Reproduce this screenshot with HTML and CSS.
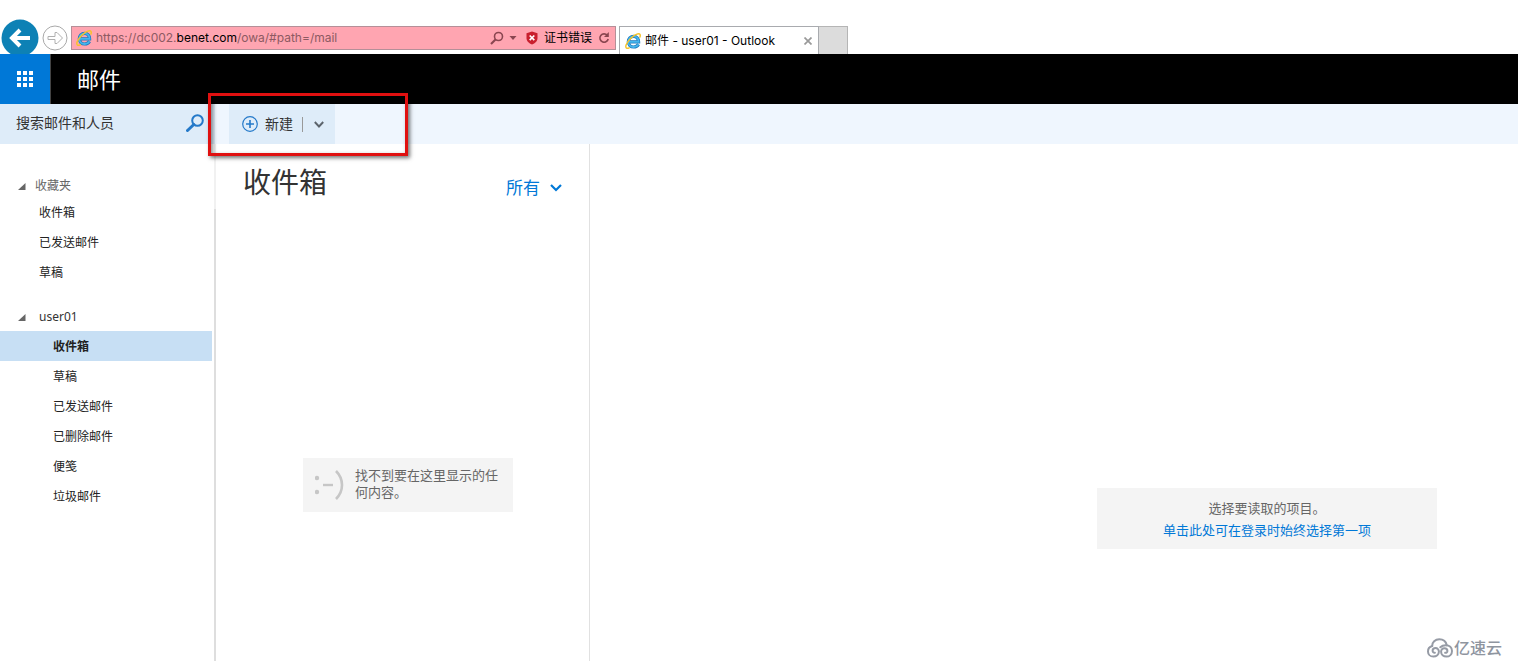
FILE: index.html
```html
<!DOCTYPE html>
<html lang="zh-CN">
<head>
<meta charset="utf-8">
<title>邮件 - user01 - Outlook</title>
<link rel="stylesheet" href="styles.css">
</head>
<body>
<svg class="defs" width="0" height="0" aria-hidden="true">
  <symbol id="ie" viewBox="0 0 16 16">
    <path d="M4 8.800h9.600C13.600 5.600 11.500 3.400 8.700 3.400 5.600 3.400 3.300 5.800 3.300 8.800c0 3 2.300 5.200 5.400 5.200 2.300 0 3.900-1 4.800-2.600" fill="none" stroke="#1b78bd" stroke-width="3.200"/>
    <path d="M4 8.800h9.600C13.600 5.600 11.500 3.400 8.700 3.400 5.600 3.400 3.300 5.800 3.300 8.800c0 3 2.300 5.200 5.400 5.200 2.300 0 3.900-1 4.800-2.600" fill="none" stroke="#45b5ec" stroke-width="1.800"/>
    <path d="M4.200 14.900C1.600 16.100.2 14.800 1.100 12 2.600 7.800 8.500 2 12.500.9c2.600-.6 3.200.8 2.400 3.200" fill="none" stroke="#f5c32c" stroke-width="1.500" stroke-linecap="round"/>
  </symbol>
</svg>

<header class="browser">
  <button class="back" aria-label="后退">
    <svg width="38" height="38" viewBox="0 0 38 38"><circle cx="19" cy="19" r="18.500" fill="#0d81b5"/><path d="M29 19H12M19 11l-8 8 8 8" fill="none" stroke="#fff" stroke-width="4"/></svg>
  </button>
  <button class="forward" aria-label="前进">
    <svg width="26" height="26" viewBox="0 0 26 26"><circle cx="13" cy="13" r="12" fill="#fff" stroke="#a9a9a9"/><path d="M6 11.500h7V7.500h2l5.500 5.500-5.500 5.500h-2v-4H6z" fill="#fff" stroke="#b0b0b0"/></svg>
  </button>
  <div class="address">
    <svg class="ie" width="16" height="16"><use href="#ie"/></svg>
    <span class="url">https://dc002.<b>benet.com</b>/owa/#path=/mail</span>
    <button aria-label="搜索"><svg width="14" height="14" viewBox="0 0 14 14" fill="none" stroke="#8a4650"><circle cx="8.500" cy="5.500" r="4" stroke-width="1.600"/><path d="M5.500 8.500L1 13" stroke-width="2.200"/></svg></button>
    <button class="drop" aria-label="地址列表"><svg width="8" height="5" viewBox="0 0 8 5"><path d="M.5 0h7L4 4z" fill="#8a4650"/></svg></button>
    <button class="cert"><svg width="12" height="14" viewBox="0 0 12 14"><path d="M6 .5l5.500 1.800V7c0 3.200-2.500 5.500-5.500 6.500C3 12.500.5 10.200.5 7V2.300z" fill="#c91f2e"/><path d="M3.700 4.500l4.600 4.600m0-4.600L3.700 9.100" stroke="#fff" stroke-width="1.700"/></svg>证书错误</button>
    <button class="reload" aria-label="刷新"><svg width="12" height="12" viewBox="0 0 12 12"><path d="M9.300 3.300A4.200 4.200 0 1 0 10.200 7" fill="none" stroke="#8a4650" stroke-width="1.600"/><path d="M10.800 0v5H6z" fill="#8a4650"/></svg></button>
  </div>
  <div class="tab">
    <svg width="16" height="16"><use href="#ie"/></svg>
    <span class="tab-title">邮件 - user01 - Outlook</span>
    <button aria-label="关闭标签页"><svg width="8" height="8" viewBox="0 0 8 8"><path d="M.5.500l7 7m0-7l-7 7" stroke="#999" stroke-width="1.700"/></svg></button>
  </div>
  <button class="new-tab" aria-label="新建标签页"></button>
</header>

<div class="app-bar">
  <button class="launcher" aria-label="应用启动器">
    <svg width="16" height="16" viewBox="0 0 16 16" fill="#fff"><path d="M0 0h4v4H0zM6 0h4v4H6zM12 0h4v4h-4zM0 6h4v4H0zM6 6h4v4H6zM12 6h4v4h-4zM0 12h4v4H0zM6 12h4v4H6zM12 12h4v4h-4z"/></svg>
  </button>
  <span class="app-name">邮件</span>
</div>

<div class="commands">
  <form class="search">
    <input type="text" aria-label="搜索邮件和人员" placeholder="搜索邮件和人员">
    <button type="button" aria-label="搜索"><svg width="18" height="18" viewBox="0 0 18 18" fill="none" stroke="#2479c9"><circle cx="11.500" cy="6.500" r="5.300" stroke-width="2"/><path d="M7.800 10.500L1.500 16.500" stroke-width="3" stroke-linecap="round"/></svg></button>
  </form>
  <div class="create">
    <button class="create-main"><svg width="16" height="16" viewBox="0 0 16 16" fill="none" stroke="#2479c9"><circle cx="8" cy="8" r="7.300" stroke-width="1.200"/><path d="M8 4v8M4 8h8" stroke-width="1.600"/></svg>新建</button>
    <span class="divider"></span>
    <button class="create-more" aria-label="更多新建选项"><svg width="10" height="7" viewBox="0 0 10 7"><path d="M.8 1l4.200 4.500L9.200 1" fill="none" stroke="#5c646c" stroke-width="1.900"/></svg></button>
  </div>
</div>

<main class="panes">
  <nav class="folders">
    <h2 class="favorites"><svg width="8" height="7" viewBox="0 0 8 7"><path d="M7.500 0v7H0z" fill="#666"/></svg>收藏夹</h2>
    <ul class="favorite-list">
      <li><a href="#">收件箱</a></li>
      <li><a href="#">已发送邮件</a></li>
      <li><a href="#">草稿</a></li>
    </ul>
    <h2 class="account"><svg width="8" height="7" viewBox="0 0 8 7"><path d="M7.500 0v7H0z" fill="#666"/></svg>user01</h2>
    <ul class="account-list">
      <li class="selected"><a href="#">收件箱</a></li>
      <li><a href="#">草稿</a></li>
      <li><a href="#">已发送邮件</a></li>
      <li><a href="#">已删除邮件</a></li>
      <li><a href="#">便笺</a></li>
      <li><a href="#">垃圾邮件</a></li>
    </ul>
  </nav>
  <div class="splitter"></div>
  <section class="messages">
    <div class="list-head">
      <h1>收件箱</h1>
      <button class="filter">所有<svg width="12" height="8" viewBox="0 0 12 8"><path d="M1 1l5 5 5-5" fill="none" stroke="#0078d7" stroke-width="2.200"/></svg></button>
    </div>
    <div class="empty">
      <svg width="30" height="32" viewBox="0 0 30 32" fill="none" stroke="#c6c6c6"><g fill="#c6c6c6" stroke="none"><circle cx="2" cy="10" r="2.200"/><circle cx="2" cy="24" r="2.200"/></g><path d="M8 17h10" stroke-width="2.400"/><path d="M21 3q6 6 6 14t-6 14" stroke-width="2.600"/></svg>
      <p>找不到要在这里显示的任何内容。</p>
    </div>
  </section>
  <section class="reading">
    <div class="hint">
      <p>选择要读取的项目。</p>
      <a href="#">单击此处可在登录时始终选择第一项</a>
    </div>
  </section>
</main>

<div class="highlight"></div>
<div class="watermark">
  <svg width="26" height="20" viewBox="0 0 26 20" fill="none" stroke="#969ba5" stroke-width="2" stroke-linecap="round">
    <path d="M5.200 8C5 4 8.200 1.300 12.300 1.300c3.900 0 6.700 2.300 7.500 5.900"/>
    <path d="M5.200 8C2.800 8.700 1 10.700 1 13.400c0 3 2.300 5.200 5.300 5.200 3.200 0 5.600-2 5.600-5 0-2-1.500-3.500-3.300-3.500-1.700 0-3 1.200-3 2.700 0 1.300 1 2.100 2.300 1.900"/>
    <path d="M13.300 9.300c1.400-1.400 3.200-2.100 5.500-2.100 3.600 0 6.200 2.300 6.200 5.700 0 3.300-2.400 5.700-5.600 5.700-3 0-5.300-2-5.300-4.800 0-2 1.400-3.600 3.300-3.600 1.700 0 3 1.200 3 2.700 0 1.300-1 2.100-2.300 1.900"/>
  </svg>
  亿速云
</div>
</body>
</html>
```
FILE: styles.css
```css
* { box-sizing: border-box; }
body {
  margin: 0;
  min-height: 100vh;
  display: flex;
  flex-direction: column;
  position: relative;
  background: #fff;
  color: #333;
  font: 12px/16px "Noto Sans", "Noto Sans CJK SC", sans-serif;
}
button {
  display: flex;
  align-items: center;
  padding: 0;
  border: 0;
  background: none;
  color: inherit;
  font: inherit;
}
a { color: inherit; text-decoration: none; }
h1, h2, p, ul { margin: 0; padding: 0; font-weight: normal; }
ul { list-style: none; }
svg { display: block; flex: none; }
.defs { position: absolute; }

/* Browser chrome */
.browser {
  height: 54px;
  padding: 19px 0 0 1px;
  display: flex;
  align-items: flex-start;
  overflow: hidden;
}
.forward { margin: 6px 3px 0; }
.address {
  width: 545px;
  height: 24px;
  margin-top: 7px;
  padding: 0 5px 0 4px;
  display: flex;
  align-items: center;
  background: #ffa5b1;
  border: 1px solid #b58f98;
  color: #000;
}
.url {
  flex: 1;
  margin-left: 4px;
  font-family: Inter, "Noto Sans", sans-serif;
  color: #8d5a62;
}
.url b { font-weight: normal; color: #000; }
.drop { margin: 0 9px 0 5px; }
.cert { gap: 6px; margin-right: 6px; }
.tab {
  width: 200px;
  height: 28px;
  margin: 7px 0 0 3px;
  padding: 0 6px 0 5px;
  display: flex;
  align-items: center;
  gap: 4px;
  border: 1px solid #a9abaf;
  border-bottom: 0;
  color: #000;
}
.tab-title { flex: 1; font-family: Inter, "Noto Sans CJK SC", sans-serif; }
.new-tab {
  width: 29px;
  height: 28px;
  margin-top: 7px;
  background: #dcdcdc;
  border: 1px solid #b5b5b5;
  border-width: 1px 1px 0 0;
}

/* Outlook bars */
.app-bar { height: 50px; display: flex; align-items: center; background: #000; color: #fff; }
.launcher { width: 51px; height: 50px; justify-content: center; background: #0078d7; border-right: 1px solid #444; }
.app-name { margin-left: 26px; font-size: 22px; line-height: 32px; }
.commands { height: 40px; display: flex; background: #eff6fe; }
.search { width: 215px; display: flex; align-items: center; padding: 0 11px 2px 16px; background: #deecf9; }
.search input {
  flex: 1;
  min-width: 0;
  padding: 0;
  border: 0;
  outline: 0;
  background: none;
  font: inherit;
  font-size: 14px;
}
.search input::placeholder { color: #333; opacity: 1; }
.create { width: 106px; margin-left: 14px; padding: 0 10px 0 13px; display: flex; align-items: center; background: #deecf9; }
.create-main { gap: 7px; font-size: 14px; }
.divider { width: 1px; height: 15px; margin: 0 11px 0 9px; background: #999; }

/* Panes */
.panes { flex: 1; display: flex; }
.folders { width: 212px; padding-top: 31px; }
.folders h2 { display: flex; align-items: center; padding-left: 18px; font-size: 12px; }
.folders .favorites { height: 22px; gap: 9px; color: #666; }
.folders .account { height: 30px; margin-top: 14px; padding-top: 2px; gap: 13px; }
.folders li { height: 30px; padding-top: 2px; display: flex; align-items: center; color: #222; }
.favorite-list li { padding-left: 39px; }
.account-list li { padding-left: 53px; }
.folders .selected { background: #c7dff4; font-weight: bold; }
.splitter { width: 2px; margin-left: 2px; border-top: 65px solid #f1f1f1; background: #dedede; }
.messages { width: 374px; border-right: 1px solid #e1e1e1; }
.list-head { height: 80px; display: flex; justify-content: space-between; padding: 18px 27px 0; }
.list-head h1 { font-size: 28px; line-height: 40px; }
.filter { height: 52px; gap: 10px; color: #0078d7; font-size: 17px; }
.empty {
  width: 210px;
  margin: 234px 0 0 87px;
  padding: 9px 12px 11px;
  display: flex;
  align-items: center;
  gap: 10px;
  background: #f4f4f4;
  color: #666;
  font-size: 13px;
  line-height: 17px;
}
.reading { flex: 1; padding: 344px 81px 0 0; }
.hint {
  width: 340px;
  margin-left: auto;
  padding: 9px 0 8px;
  background: #f4f4f4;
  color: #666;
  text-align: center;
  font-size: 13px;
  line-height: 22px;
}
.hint a { color: #0078d7; }

/* Overlays */
.highlight {
  position: absolute;
  left: 208px;
  top: 93px;
  width: 200px;
  height: 63px;
  border: 3px solid #e01010;
  box-shadow: 2px 2px 4px rgba(0, 0, 0, .55), inset 2px 2px 4px rgba(0, 0, 0, .45);
}
.watermark {
  position: absolute;
  right: 16px;
  bottom: 3px;
  display: flex;
  align-items: center;
  gap: 1px;
  color: #8f959f;
  font-size: 16px;
  line-height: 20px;
  font-weight: 500;
}
```
